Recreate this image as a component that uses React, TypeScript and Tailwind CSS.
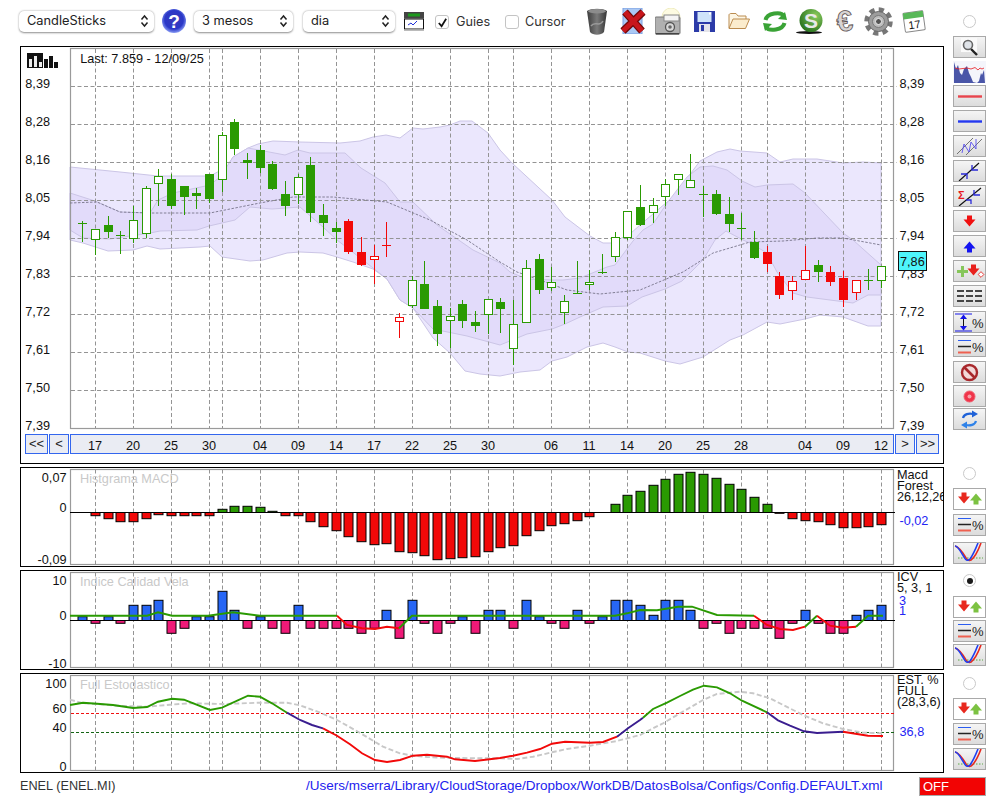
import type { ReactNode } from "react";

// candle x centres, read off the chart (spacing is not quite regular)
const X = [82,95,108,120,133,146,158,171,184,196,209,222,234,247,260,272,285,298,310,323,336,348,361,374,386,399,412,424,437,450,462,475,488,500,513,526,539,551,564,577,589,602,615,627,640,653,665,678,690,703,716,729,741,754,767,779,792,805,818,830,843,856,868,881];
const GRID_X = [95,133,171,209,222,260,298,336,374,412,450,488,513,551,589,627,665,703,741,767,805,843,881];
const DATES: [string, number][] = [["17",95],["20",133],["25",171],["30",209],["04",260],["09",298],["14",336],["17",374],["22",412],["25",450],["30",488],["06",551],["11",589],["14",627],["20",665],["25",703],["28",741],["04",805],["09",843],["12",881]];
const PRICES = ["8,39","8,28","8,16","8,05","7,94","7,83","7,72","7,61","7,50","7,39"];

// wick top, wick bottom, body top, body bottom, kind (G filled green, g hollow green, R filled red, r hollow red)
type Candle = [number, number, number, number, "G" | "g" | "R" | "r"];
const CANDLES: Candle[] = [
  [221,242,223,223,"G"],[229,255,229,239,"g"],[216,238,225,232,"G"],[231,254,235,235,"G"],
  [206,243,220,238,"g"],[186,238,188,233,"g"],[169,206,176,183,"g"],[174,209,179,206,"G"],
  [186,215,186,197,"G"],[188,209,193,196,"G"],[174,203,174,199,"G"],[132,192,135,179,"g"],
  [119,155,122,149,"G"],[153,179,160,163,"G"],[145,173,150,168,"G"],[161,190,164,189,"G"],
  [181,216,194,206,"G"],[174,204,177,194,"g"],[157,222,165,213,"G"],[204,236,215,223,"G"],
  [222,243,228,232,"G"],[219,254,221,252,"R"],[237,266,252,265,"R"],[245,284,256,259,"r"],
  [222,257,245,245,"R"],[313,338,317,321,"r"],[276,308,280,305,"g"],[261,309,284,309,"G"],
  [300,346,306,334,"G"],[308,348,316,320,"g"],[300,328,304,321,"G"],[311,332,322,326,"G"],
  [299,334,299,314,"g"],[298,333,302,309,"G"],[300,365,324,348,"g"],[260,323,268,322,"g"],
  [254,294,259,290,"G"],[267,291,282,287,"g"],[295,324,301,312,"g"],[261,293,293,293,"G"],
  [270,290,282,284,"g"],[254,274,272,272,"G"],[232,262,237,256,"g"],[211,240,211,237,"g"],
  [185,226,207,225,"G"],[198,223,205,212,"g"],[179,206,184,196,"g"],[174,195,174,179,"g"],
  [154,188,180,187,"g"],[186,217,194,194,"G"],[190,215,194,214,"G"],[197,232,214,224,"G"],
  [213,240,228,228,"G"],[231,259,242,258,"G"],[246,272,252,264,"R"],[272,299,276,295,"R"],
  [276,300,281,290,"r"],[246,279,270,279,"r"],[260,282,265,272,"G"],[266,286,272,282,"R"],
  [271,307,278,300,"R"],[280,300,280,292,"r"],[269,290,280,280,"G"],[266,288,266,280,"g"],
];

const MACD = [0,515.7,518.7,521.7,521.7,518.7,514.7,515.7,515.7,515.7,515.7,509.3,506.3,506.3,507.3,511.3,515.7,515.7,521.7,526.7,530.7,536.7,541.7,544.7,543.7,551.7,552.7,555.7,559.7,558.7,557.7,556.7,551.7,547.7,545.7,535.7,530.7,525.7,523.7,520.7,516.7,0,504.3,495.3,491.3,485.3,479.3,474.3,472.3,474.3,478.3,484.3,489.3,497.3,504.3,513.3,518.7,520.7,521.7,524.7,527.7,527.7,526.7,524.7];
const ICV = [616.7,623.3,616.7,623.3,605.3,605.3,600.3,633.3,628.3,616.7,616.7,591.3,610.3,628.3,616.7,628.3,633.3,605.3,628.3,628.3,628.3,628.3,633.3,628.3,610.3,638.3,600.3,623.3,633.3,623.3,616.7,633.3,610.3,610.3,628.3,600.3,616.7,623.3,628.3,610.3,623.3,616.7,600.3,600.3,605.3,615.3,600.3,600.3,610.3,628.3,623.3,633.3,628.3,628.3,628.3,638.3,623.3,610.3,623.3,633.3,633.3,615.3,610.3,605.3];

const UNION_TOP = "70,167 120,172 158,176 184,176 210,176 227,167 233,157 248,148 258,144 273,141 300,142 340,143 360,141 373,137 386,135 400,138 413,128 423,129 440,127 450,125 460,121 472,121 488,133 500,150 512,163 552,200 565,217 590,236 603,243 611,243 630,234 640,225 660,208 673,197 700,161 717,152 730,149 740,151 767,153 780,162 793,159 817,159 843,163 863,162 881,163";
const UNION_BOTTOM = "881,326 868,326 843,317 820,315 805,319 780,324 767,322 743,335 730,340 703,357 680,364 665,361 640,353 628,352 615,347 603,343 587,347 567,357 552,361 540,370 520,372 500,376 480,374 465,371 450,353 433,338 413,308 400,300 387,279 373,269 353,262 337,257 323,253 300,252 287,253 263,260 250,261 222,257 210,246 200,247 160,249 147,246 133,250 108,251 83,243 70,240";
const OVERLAP_TOP = "70,193 95,201 120,212 150,213 158,200 173,193 210,185 220,177 233,157 248,148 285,155 298,150 310,153 345,153 361,168 385,183 400,202 413,202 437,225 473,250 500,263 510,272 527,279 552,280 563,280 580,278 607,267 615,265 633,241 643,230 653,224 667,203 687,177 700,167 713,166 727,170 742,181 755,187 767,185 793,184 805,193 843,233 853,240 881,265";
const OVERLAP_BOTTOM = "881,295 868,295 853,303 807,297 793,293 777,272 767,253 750,243 743,240 726,231 715,240 703,260 682,281 665,289 642,297 627,306 603,307 580,317 565,324 552,329 527,334 500,345 467,336 433,329 413,308 400,300 387,279 373,268 350,250 337,240 323,227 300,207 272,209 250,207 235,220 209,226 197,230 160,231 150,233 110,239 83,238 70,230";
const SMA = "70,203 97,202 120,212 150,213 210,213 260,203 293,197 333,197 387,202 430,220 467,240 500,262 517,272 540,280 567,290 600,294 640,290 683,272 713,253 750,242 783,241 817,238 843,238 881,245";

const GREEN = "#2a9a02";
const RED = "#f20909";
const BLUE = "#2766f5";
const PINK = "#ef1a78";
const LINE_BLUE = "#3a1d8f";
const GRID = "#949494";

function Radio({ checked, className }: { checked?: boolean; className: string }) {
  return (
    <div className={`flex h-[13px] w-[13px] items-center justify-center self-center rounded-full border border-[#c9c9c9] bg-white ${className}`}>
      {checked && <div className="h-[6px] w-[6px] rounded-full bg-[#1a1a1a]" />}
    </div>
  );
}

function SideBtn({ children, className = "" }: { children: ReactNode; className?: string }) {
  return (
    <div className={`flex h-[22px] w-[33px] items-center justify-center border-[1.5px] border-[#a9a9a9] bg-gradient-to-b from-[#f5f5f5] to-[#dcdcdc] ${className}`}>
      {children}
    </div>
  );
}

function Icon({ children }: { children: ReactNode }) {
  return <svg viewBox="0 0 31 19" className="block h-[19px] w-[31px]">{children}</svg>;
}

function ArrowDown({ x, y, fill, s = 1 }: { x: number; y: number; fill: string; s?: number }) {
  return <polygon transform={`translate(${x} ${y}) scale(${s})`} points="-2.5,-6 2.5,-6 2.5,-2 6,-2 0,5 -6,-2 -2.5,-2" fill={fill} />;
}

function ArrowUp({ x, y, fill, s = 1 }: { x: number; y: number; fill: string; s?: number }) {
  return <polygon transform={`translate(${x} ${y}) scale(${s})`} points="-2.5,6 2.5,6 2.5,2 6,2 0,-5 -6,2 -2.5,2" fill={fill} />;
}

function Signals() {
  return (
    <Icon>
      <ArrowDown x={10} y={9.5} fill="#e8281e" />
      <ArrowUp x={22} y={9.5} fill="#7cc242" />
    </Icon>
  );
}

function LinesPct() {
  return (
    <Icon>
      <line x1="4" x2="17" y1="3.5" y2="3.5" stroke="#2a5cf0" strokeWidth="1" />
      <line x1="4" x2="17" y1="9.5" y2="9.5" stroke="#222" strokeWidth="1.5" />
      <line x1="4" x2="17" y1="15.5" y2="15.5" stroke="#ee6050" strokeWidth="2" />
      <text x="18" y="15" fontSize="13" fill="#222">%</text>
    </Icon>
  );
}

function Curves() {
  return (
    <Icon>
      <line x1="4" x2="29" y1="15" y2="15" stroke="#3a9a20" strokeWidth="0.8" strokeDasharray="1.5 1.5" />
      <path d="M1 3 C5 4 8 8 12 15 C13 17 15 18 17 17 C20 15 24 8 27 0" fill="none" stroke="#e8281e" strokeWidth="1.6" />
      <path d="M1 3 C4 3 7 9 10 14 C12 18 14 18 16 16 C19 12 22 5 24 0" fill="none" stroke="#1f3ff0" strokeWidth="1.6" />
    </Icon>
  );
}

function SideColumn() {
  return (
    <div className="ml-[9px] flex w-[33px] flex-col">
      <Radio className="mt-[15px]" />
      <SideBtn className="mt-[8px]">
        <Icon>
          <rect x="7" y="0" width="16" height="14" fill="#fafafa" />
          <line x1="17" y1="11" x2="23" y2="17" stroke="#222" strokeWidth="2.4" />
          <circle cx="14" cy="7" r="4.5" fill="#dfe3e8" stroke="#666" strokeWidth="1.6" />
        </Icon>
      </SideBtn>
      <div className="mt-[3px] h-[22px] w-[33px] bg-[#f4f5fb]">
        <svg viewBox="0 0 33 22" className="block h-full w-full">
          <path d="M1 22 L1 1 L3 8 L5 4 L7 12 L9 14 L11 8 L14 5 L16 12 L18 16 L20 21 L24 22 L26 20 L28 12 L29 14 L31 9 L32 22 Z" fill="#4a56a8" />
          <path d="M2 7 L6 8 L10 7.5 L14 7 L18 8 L22 6.5 L25 9 L27 7 L29 8 L31 7" fill="none" stroke="#e8181e" strokeWidth="0.8" />
        </svg>
      </div>
      <SideBtn className="mt-[2px]">
        <Icon><line x1="4" x2="28" y1="9.5" y2="9.5" stroke="#e8444c" strokeWidth="2.4" /></Icon>
      </SideBtn>
      <SideBtn className="mt-[3px]">
        <Icon><line x1="4" x2="28" y1="9.5" y2="9.5" stroke="#2438f0" strokeWidth="2.4" /></Icon>
      </SideBtn>
      <SideBtn className="mt-[3px]">
        <Icon>
          <line x1="3" y1="17" x2="19" y2="1" stroke="#555" strokeWidth="0.8" />
          <line x1="12" y1="18" x2="28" y2="2" stroke="#555" strokeWidth="0.8" />
          <path d="M8 16 L10 7 L15 15 L17 5 L22 12 L22 2" fill="none" stroke="#5a50f0" strokeWidth="0.9" />
        </Icon>
      </SideBtn>
      <SideBtn className="mt-[3px]">
        <Icon>
          <line x1="5" y1="19" x2="25" y2="1" stroke="#111" strokeWidth="1.2" />
          <path d="M7 12 L13 12 L13 17 M18 3 L18 8 L24 8" fill="none" stroke="#2a2ad8" strokeWidth="1.3" />
        </Icon>
      </SideBtn>
      <SideBtn className="mt-[3px]">
        <Icon>
          <line x1="5" y1="19" x2="27" y2="1" stroke="#111" strokeWidth="1.2" />
          <path d="M12 13 L17 13 L17 17 M20 3 L20 8 L26 8" fill="none" stroke="#2a2ad8" strokeWidth="1.3" />
          <text x="4" y="12" fontSize="11" fontWeight="bold" fill="#e8181e">Σ</text>
        </Icon>
      </SideBtn>
      <SideBtn className="mt-[3px]">
        <Icon><ArrowDown x={15.5} y={9.5} fill="#f01010" /></Icon>
      </SideBtn>
      <SideBtn className="mt-[3px]">
        <Icon><ArrowUp x={15.5} y={9.5} fill="#1414f0" /></Icon>
      </SideBtn>
      <SideBtn className="mt-[3px]">
        <Icon>
          <path d="M7 4 L10 4 L10 8 L14 8 L14 11 L10 11 L10 15 L7 15 L7 11 L3 11 L3 8 L7 8 Z" fill="#86c65a" />
          <ArrowDown x={19.5} y={8.5} fill="#e8201c" />
          <rect x="25" y="10.5" width="4" height="4" transform="rotate(45 27 12.5)" fill="#fff" stroke="#e8201c" strokeWidth="0.8" />
        </Icon>
      </SideBtn>
      <SideBtn className="mt-[3px]">
        <Icon>
          {[4, 9, 14].map((y) => (
            <line key={y} x1="3" x2="28" y1={y} y2={y} stroke="#444" strokeWidth="2" strokeDasharray="7 2" />
          ))}
        </Icon>
      </SideBtn>
      <SideBtn className="mt-[4px]">
        <Icon>
          <line x1="1" x2="18" y1="1" y2="1" stroke="#1414e8" strokeWidth="1" />
          <line x1="1" x2="18" y1="18" y2="18" stroke="#1414e8" strokeWidth="1" />
          <line x1="9.5" x2="9.5" y1="3" y2="16" stroke="#111" strokeWidth="1" />
          <polygon points="9.5,1.5 13,6 6,6" fill="#1414e8" />
          <polygon points="9.5,17.5 13,13 6,13" fill="#1414e8" />
          <text x="18" y="15" fontSize="13" fill="#222">%</text>
        </Icon>
      </SideBtn>
      <SideBtn className="mt-[2px]"><LinesPct /></SideBtn>
      <SideBtn className="mt-[4px]">
        <Icon>
          <circle cx="15.5" cy="9.5" r="7.5" fill="#f3d8d8" stroke="#a8282c" strokeWidth="2.4" />
          <line x1="10.5" y1="4.5" x2="20.5" y2="14.5" stroke="#a8282c" strokeWidth="2.6" />
        </Icon>
      </SideBtn>
      <SideBtn className="mt-[2px]">
        <Icon><circle cx="15.5" cy="9.5" r="5.5" fill="#f0344a" stroke="#f06070" strokeWidth="1" /><circle cx="15.5" cy="9.5" r="2" fill="#f8a0a8" /></Icon>
      </SideBtn>
      <SideBtn className="mt-[1px]">
        <Icon>
          <path d="M9 8 C10 4 15 3 19 4" fill="none" stroke="#1f62d8" strokeWidth="2.2" />
          <polygon points="18,0.5 24,4 18,7.5" fill="#1f62d8" />
          <path d="M22 11 C21 15 16 16 12 15" fill="none" stroke="#2f82e8" strokeWidth="2.2" />
          <polygon points="13,11.5 7,15 13,18.5" fill="#2f82e8" />
        </Icon>
      </SideBtn>

      <Radio className="mt-[36.5px]" />
      <SideBtn className="mt-[8px] bg-white bg-none"><Signals /></SideBtn>
      <SideBtn className="mt-[4px]"><LinesPct /></SideBtn>
      <SideBtn className="mt-[6px]"><Curves /></SideBtn>

      <Radio checked className="mt-[10.5px]" />
      <SideBtn className="mt-[8.5px] bg-white bg-none"><Signals /></SideBtn>
      <SideBtn className="mt-[2px]"><LinesPct /></SideBtn>
      <SideBtn className="mt-[2px]"><Curves /></SideBtn>

      <Radio className="mt-[11.5px]" />
      <SideBtn className="mt-[7.5px] bg-white bg-none"><Signals /></SideBtn>
      <SideBtn className="mt-[3px]"><LinesPct /></SideBtn>
      <SideBtn className="mt-[3px]"><Curves /></SideBtn>
    </div>
  );
}

function Select({ label, className }: { label: string; className: string }) {
  return (
    <div className={`flex h-[21px] items-center justify-between rounded-[5px] bg-white pl-[8px] pr-[5px] text-[12.8px] text-[#222] shadow-[0_0.5px_2px_rgba(0,0,0,0.45)] ${className}`}>
      <span className="font-['Inter',sans-serif]">{label}</span>
      <svg viewBox="0 0 9 14" className="h-[14px] w-[9px]">
        <path d="M1.5 5.5 L4.5 2 L7.5 5.5 M1.5 8.5 L4.5 12 L7.5 8.5" fill="none" stroke="#222" strokeWidth="1.5" />
      </svg>
    </div>
  );
}

function Check({ checked, label, boxClass, labelClass }: { checked?: boolean; label: string; boxClass: string; labelClass: string }) {
  return (
    <>
      <div className={`mt-[2px] flex h-[14px] w-[14px] items-center justify-center rounded-[3px] border border-[#c4c4c4] bg-white ${boxClass}`}>
        {checked && (
          <svg viewBox="0 0 12 12" className="h-[11px] w-[11px]">
            <path d="M2 6.5 L5 10 L10 2" fill="none" stroke="#111" strokeWidth="1.9" />
          </svg>
        )}
      </div>
      <span className={`mt-[2px] font-['Inter',sans-serif] text-[12.7px] text-[#333] ${labelClass}`}>{label}</span>
    </>
  );
}

function Toolbar() {
  return (
    <div className="mb-[4px] flex h-[42px] items-center pl-[19px]">
      <Select label="CandleSticks" className="w-[135px]" />
      <svg viewBox="0 0 24 24" className="ml-[8px] h-[24px] w-[24px]">
        <defs>
          <radialGradient id="helpBall" cx="50%" cy="45%" r="55%">
            <stop offset="0%" stopColor="#3a3ab8" />
            <stop offset="70%" stopColor="#2a38c8" />
            <stop offset="100%" stopColor="#8a9cf4" />
          </radialGradient>
        </defs>
        <circle cx="12" cy="12" r="12" fill="url(#helpBall)" />
        <text x="12" y="18.5" textAnchor="middle" fontSize="19" fontWeight="bold" fill="#fff">?</text>
      </svg>
      <Select label="3 mesos" className="ml-[8px] w-[99px]" />
      <Select label="dia" className="ml-[10px] w-[92px]" />
      <svg viewBox="0 0 20 19" className="ml-[9px] mt-[1px] h-[19px] w-[20px]">
        <rect x="0" y="0" width="20" height="6.5" fill="#444" />
        <rect x="4" y="1.5" width="12" height="3" fill="#1d9a1d" />
        <rect x="0.5" y="7" width="19" height="10" fill="#fff" stroke="#111" />
        <path d="M4 13 L7 11 L9 13 L13 9" fill="none" stroke="#2030d8" strokeWidth="1" />
        <rect x="0" y="17.5" width="20" height="1.5" fill="#bbb" />
      </svg>
      <Check checked label="Guies" boxClass="ml-[11px]" labelClass="ml-[7px] w-[49px]" />
      <Check label="Cursor" boxClass="ml-[0px]" labelClass="ml-[6px] w-[62px]" />

      <svg viewBox="0 0 20 27" className="h-[27px] w-[20px]">
        <defs>
          <linearGradient id="bin" x1="0" x2="1" y1="0" y2="0">
            <stop offset="0%" stopColor="#3c3c3c" />
            <stop offset="50%" stopColor="#7a7a7a" />
            <stop offset="100%" stopColor="#353535" />
          </linearGradient>
        </defs>
        <path d="M0 3 C4 0 16 0 20 3 L17 24 C14 27.5 6 27.5 3 24 Z" fill="url(#bin)" />
        <ellipse cx="10" cy="3.2" rx="9" ry="2.2" fill="#8c8c8c" />
        <path d="M4 18 C8 12 12 20 16 13" fill="none" stroke="#999" strokeWidth="1.5" />
      </svg>
      <svg viewBox="0 0 26 26" className="ml-[13px] h-[26px] w-[26px]">
        <rect x="3" y="0" width="19" height="26" fill="#aac8f4" stroke="#7a9fe0" />
        <path d="M3 23 L23 4 M5 4 L22 23" stroke="#720808" strokeWidth="7.5" />
        <path d="M3 23 L23 4 M5 4 L22 23" stroke="#c8161c" strokeWidth="5" />
      </svg>
      <svg viewBox="0 0 26 27" className="ml-[9px] h-[27px] w-[26px]">
        <circle cx="16" cy="9" r="9" fill="#fdfbe2" stroke="#efecc0" />
        <rect x="0" y="9" width="25" height="17" rx="1" fill="#b0b0b0" stroke="#777" />
        <rect x="9" y="7" width="15" height="6" fill="#f4f4f4" stroke="#888" />
        <circle cx="15" cy="19" r="4.5" fill="#d8d8d8" stroke="#555" strokeWidth="1.3" />
        <circle cx="15" cy="19" r="1.8" fill="#666" />
        <rect x="1" y="25" width="23" height="1.5" fill="#444" />
      </svg>
      <svg viewBox="0 0 21 21" className="ml-[13px] h-[21px] w-[21px]">
        <rect x="0" y="0" width="21" height="21" fill="#2c3ba8" />
        <rect x="3.5" y="1" width="14" height="10" fill="#cfe4fa" />
        <rect x="15" y="1.5" width="2" height="2" fill="#fff" />
        <rect x="5" y="13" width="11" height="8" fill="#e4e4ea" />
        <rect x="7" y="14" width="3" height="6" fill="#2c3ba8" />
      </svg>
      <svg viewBox="0 0 22 16" className="ml-[13px] h-[16px] w-[22px]">
        <path d="M1 15 L1 2 C1 1 2 0.5 3 0.5 L8 0.5 L10 3 L18 3 L18 6" fill="#fdf6e4" stroke="#bb8c50" />
        <path d="M1 15.5 L5 6 L21.5 6 L17.5 15.5 Z" fill="#fbeccd" stroke="#bb8c50" />
      </svg>
      <svg viewBox="0 0 24 23" className="ml-[13px] h-[23px] w-[24px]">
        <path d="M2.5 10 C4 3 18 1 21 6" fill="none" stroke="#3aa336" strokeWidth="4" />
        <polygon points="24,10 15,9 22,2" fill="#3aa336" />
        <path d="M21.5 13 C20 20 6 22 3 17" fill="none" stroke="#3aa336" strokeWidth="4" />
        <polygon points="0,13 9,14 2,21" fill="#3aa336" />
      </svg>
      <svg viewBox="0 0 27 25" className="ml-[9px] h-[25px] w-[27px]">
        <defs>
          <radialGradient id="coin" cx="70%" cy="30%" r="80%">
            <stop offset="0%" stopColor="#8acb5e" />
            <stop offset="100%" stopColor="#26701c" />
          </radialGradient>
        </defs>
        <ellipse cx="13" cy="23.5" rx="13" ry="1.5" fill="#111" />
        <circle cx="15" cy="11.5" r="11.5" fill="url(#coin)" />
        <text x="15" y="19" textAnchor="middle" fontSize="21" fontWeight="bold" fill="#e8e8e8">S</text>
      </svg>
      <svg viewBox="0 0 25 25" className="ml-[9px] h-[25px] w-[25px]">
        <text x="12.5" y="22" textAnchor="middle" fontSize="29" fontWeight="bold" fill="#d8d4d4" stroke="#5a5050" strokeWidth="0.8" transform="rotate(-8 12 12)">€</text>
      </svg>
      <svg viewBox="0 0 29 29" className="ml-[7px] h-[29px] w-[29px]">
        <circle cx="14.5" cy="14.5" r="12" fill="none" stroke="#777" strokeWidth="4.5" strokeDasharray="5.2 4.2" />
        <circle cx="14.5" cy="14.5" r="10" fill="#9c9c9c" stroke="#666" />
        <circle cx="14.5" cy="14.5" r="6" fill="#bdbdbd" stroke="#7a7a7a" />
        <circle cx="14.5" cy="14.5" r="3" fill="#555" stroke="#eee" />
      </svg>
      <svg viewBox="0 0 24 24" className="ml-[9px] h-[24px] w-[24px]">
        <g transform="rotate(-8 12 12)">
          <rect x="2" y="3" width="20" height="19" rx="1" fill="#fff" stroke="#888" />
          <rect x="2" y="3" width="20" height="6" fill="#58b858" />
          <text x="12" y="19.5" textAnchor="middle" fontSize="11" fill="#111">17</text>
        </g>
      </svg>
    </div>
  );
}

function Grid({ top, bottom }: { top: number; bottom: number }) {
  return (
    <>
      {GRID_X.map((x) => (
        <line key={x} x1={x + 0.5} x2={x + 0.5} y1={top} y2={bottom} stroke={GRID} strokeDasharray="4 2.5" />
      ))}
    </>
  );
}

function Frame({ top, bottom }: { top: number; bottom: number }) {
  return <rect x="70.5" y={top} width="823" height={bottom - top} fill="none" stroke="#9a9a9a" strokeWidth="1.2" />;
}

function Label({ x, y, anchor, fill = "#111", children }: { x: number; y: number; anchor?: "end"; fill?: string; children: ReactNode }) {
  return <text x={x} y={y} textAnchor={anchor} fill={fill} fontSize="12.7">{children}</text>;
}

function MainChart() {
  return (
    <svg viewBox="21 47 922 387" className="block h-[387px] w-[922px]">
      <polygon points={`${UNION_TOP} ${UNION_BOTTOM}`} fill="#ebe7fd" stroke="#cbc5e6" />
      <polygon points={`${OVERLAP_TOP} ${OVERLAP_BOTTOM}`} fill="#e2dbfa" stroke="#cbc5e6" />
      <Frame top={48.5} bottom={428.5} />
      {PRICES.slice(0, 9).map((_, i) => (
        <line key={i} x1="71" x2="897" y1={86.5 + i * 38} y2={86.5 + i * 38} stroke={GRID} strokeDasharray="4 2.5" />
      ))}
      <Grid top={49} bottom={428} />
      <polyline points={SMA} fill="none" stroke="#77748a" strokeWidth="0.9" strokeDasharray="2.5 1.5" />

      {CANDLES.map(([wt, wb, bt, bb, kind], i) => {
        const x = X[i] + 0.5;
        const color = kind === "G" || kind === "g" ? GREEN : RED;
        const hollow = kind === "g" || kind === "r";
        return (
          <g key={i}>
            <line x1={x} x2={x} y1={wt} y2={wb} stroke={color} />
            {bt === bb ? (
              <line x1={x - 4.5} x2={x + 4.5} y1={bt + 0.5} y2={bt + 0.5} stroke={color} />
            ) : hollow ? (
              <rect x={x - 4} y={bt + 0.5} width={8} height={bb - bt} fill="#fff" stroke={color} />
            ) : (
              <rect x={x - 4.5} y={bt} width={9} height={bb - bt} fill={color} />
            )}
          </g>
        );
      })}

      <rect x="27" y="53" width="16" height="15" fill="#111" />
      <rect x="29" y="59" width="3" height="8" fill="#eee" />
      <rect x="34" y="56" width="3" height="11" fill="#eee" />
      <rect x="39" y="62" width="3" height="5" fill="#eee" />
      <rect x="44" y="59" width="4" height="9" fill="#111" />
      <rect x="49" y="56" width="4" height="12" fill="#111" />
      <rect x="54" y="62" width="4" height="6" fill="#111" />

      <Label x={80.3} y={63}>Last: 7.859 - 12/09/25</Label>
      {PRICES.map((p, i) => (
        <g key={p}>
          <Label x={25.3} y={88 + i * 38}>{p}</Label>
          <Label x={899.5} y={88 + i * 38}>{p}</Label>
        </g>
      ))}
      <rect x="898.5" y="251.5" width="28" height="19" fill="#4ef5fb" stroke="#111" />
      <Label x={900} y={265.5}>7,86</Label>
    </svg>
  );
}

function NavBtn({ label, className }: { label: string; className: string }) {
  return (
    <div className={`flex h-[20px] items-center justify-center border border-[#3366ee] bg-[#eaecf3] text-[13px] text-[#222] ${className}`}>
      {label}
    </div>
  );
}

function DateNav() {
  return (
    <div className="flex gap-[1px] pl-[4px]">
      <NavBtn label="<<" className="w-[23px]" />
      <NavBtn label="<" className="w-[20px]" />
      <div className="h-[20px] w-[824px] border border-[#3366ee] bg-[#eaecf3]">
        <svg viewBox="71 435 822 18" className="block h-[18px] w-[822px]">
          {DATES.map(([d, x], i) => (
            <text key={i} x={x} y={449.5} textAnchor="middle" fill="#111" fontSize="12.7">{d}</text>
          ))}
        </svg>
      </div>
      <NavBtn label=">" className="w-[20px]" />
      <NavBtn label=">>" className="w-[23px]" />
    </div>
  );
}

function SubChart({ top, title, frameTop, frameBottom, children }: { top: number; title: string; frameTop: number; frameBottom: number; children: ReactNode }) {
  return (
    <div className="mt-[3px] h-[100px] w-[924px] border border-black bg-white">
      <svg viewBox={`21 ${top} 922 98`} className="block h-[98px] w-[922px]">
        <Frame top={frameTop} bottom={frameBottom} />
        <Grid top={frameTop} bottom={frameBottom} />
        <text x="80" y={frameTop + 13} fill="#c9c9c9" fontSize="12.7">{title}</text>
        {children}
      </svg>
    </div>
  );
}

function MacdChart() {
  return (
    <SubChart top={468} title="Histgrama MACD" frameTop={469.5} frameBottom={564.5}>
      {MACD.map((v, i) =>
        v === 0 ? null : (
          <rect key={i} x={X[i] - 4} y={Math.min(v, 512.5)} width="9" height={Math.abs(v - 512.5)} fill={v < 512 ? GREEN : RED} stroke="#000" />
        )
      )}
      <line x1="70" x2="895" y1="512.5" y2="512.5" stroke="#000" />
      <Label x={66.5} y={482} anchor="end">0,07</Label>
      <Label x={66.5} y={512} anchor="end">0</Label>
      <Label x={66.5} y={564} anchor="end">-0,09</Label>
      <Label x={897} y={478.5}>Macd</Label>
      <Label x={897} y={489.5}>Forest</Label>
      <Label x={897} y={500.5}>26,12,26</Label>
      <Label x={899.5} y={525} fill="#2424f4">-0,02</Label>
    </SubChart>
  );
}

const ICV_LINES: [string, string][] = [
  [GREEN, "70,615.7 147,615.7 158,612.3 172,615.7 208,615.7 233,612.3 260,615.7 337,615.7"],
  [RED, "337,615.7 347,625 362,628.3 375,629 387,626.7 399,628.3"],
  [GREEN, "399,628.3 412,615.7 615,615.7 627,613.3 640,610 657,610.3 678,606.7 692,606.7 717,615 754,615.7"],
  [RED, "754,615.7 767,625 780,629 793,630 805,626.7"],
  [GREEN, "805,626.7 817,615.7"],
  [RED, "817,615.7 830,625.7 843,627.7 856,626.7"],
  [GREEN, "856,626.7 868,615.7 883,615.7"],
];

function IcvChart() {
  return (
    <SubChart top={571} title="Indice Calidad Vela" frameTop={572.5} frameBottom={667.5}>
      {ICV.map((v, i) => (
        <rect key={i} x={X[i] - 4} y={Math.min(v, 620.5)} width="9" height={Math.abs(v - 620.5)} fill={v < 620 ? BLUE : PINK} stroke="#000" />
      ))}
      <line x1="70" x2="895" y1="620.5" y2="620.5" stroke="#000" />
      {ICV_LINES.map(([color, pts], i) => (
        <polyline key={i} points={pts} fill="none" stroke={color} strokeWidth="1.9" />
      ))}
      <Label x={66.5} y={585} anchor="end">10</Label>
      <Label x={66.5} y={620} anchor="end">0</Label>
      <Label x={66.5} y={667.5} anchor="end">-10</Label>
      <Label x={897} y={581}>ICV</Label>
      <Label x={897} y={592}>5, 3, 1</Label>
      <Label x={899} y={604.5} fill="#2424f4">3</Label>
      <Label x={899} y={615} fill="#2424f4">1</Label>
    </SubChart>
  );
}

const EST_SIGNAL = "70,699.7 83,703.3 97,704 117,705.7 147,706.7 170,704.7 190,703.3 223,704 260,702.7 287,702.7 300,705.3 322,713.3 337,720 358,731.7 383,746.7 400,753.3 413,755.7 427,757 450,758 500,758.3 517,759 533,756.7 552,752.3 567,749 590,745.7 617,741 640,735 663,723.3 680,713.3 703,700 717,694 740,691.7 753,693.3 770,698.3 803,715 823,723.3 843,729 863,732.7 882,733.3";
const EST_LINES: [string, string][] = [
  [GREEN, "70,705 83,702.7 97,703.7 113,705 133,708 147,707 158,701.7 172,698.7 184,699.7 210,710 222,707.7 248,695.7 260,696.7 272,703.3 287,712.7"],
  [LINE_BLUE, "287,712.7 300,720 312,725 323,728.3"],
  [RED, "323,728.3 337,735.7 350,744.3 362,753.3 375,760 387,762 400,760 413,755.7 427,754.7 447,756.7 455,759.3 475,761 500,758 513,755.7 527,752.7 540,749 552,743.7 565,741.7 590,742.7 603,742 617,736.7"],
  [LINE_BLUE, "617,736.7 628,728.3 640,720 643,717.7"],
  [GREEN, "643,717.7 653,709 667,702.7 680,696 693,689.7 704,685.7 717,687.3 730,693.3 742,700.7 767,712.3"],
  [LINE_BLUE, "767,712.3 778,720.3 790,725.7 804,731.3 817,733 843,731.7"],
  [RED, "843,731.7 857,734 868,735.7 883,736"],
];

function EstChart() {
  return (
    <SubChart top={674} title="Full Estodastico" frameTop={675.5} frameBottom={770.5}>
      <line x1="71" x2="895" y1="713.5" y2="713.5" stroke="#f01010" strokeDasharray="3 2" />
      <line x1="71" x2="895" y1="732.5" y2="732.5" stroke="#146414" strokeDasharray="3 2" />
      <polyline points={EST_SIGNAL} fill="none" stroke="#c8c8c8" strokeWidth="1.9" strokeDasharray="5 2.5" />
      {EST_LINES.map(([color, pts], i) => (
        <polyline key={i} points={pts} fill="none" stroke={color} strokeWidth="1.9" />
      ))}
      <Label x={66.5} y={688} anchor="end">100</Label>
      <Label x={66.5} y={713} anchor="end">60</Label>
      <Label x={66.5} y={732} anchor="end">40</Label>
      <Label x={66.5} y={770.5} anchor="end">0</Label>
      <Label x={897} y={684}>EST. %</Label>
      <Label x={897} y={695}>FULL</Label>
      <Label x={897} y={706}>(28,3,6)</Label>
      <Label x={899.5} y={735.5} fill="#2424f4">36,8</Label>
    </SubChart>
  );
}

function StatusBar() {
  return (
    <div className="flex h-[27px] items-center pl-[20px] pr-[14px] text-[12.7px]">
      <span className="w-[286px] text-[#333]">ENEL (ENEL.MI)</span>
      <span className="text-[13.5px] text-[#2222ee]">/Users/mserra/Library/CloudStorage/Dropbox/WorkDB/DatosBolsa/Configs/Config.DEFAULT.xml</span>
      <div className="ml-auto flex h-[19px] w-[67px] items-center border-[1.5px] border-[#a9a9a9] bg-[#f20404] pl-[3px] text-[13px] text-white">
        OFF
      </div>
    </div>
  );
}

export default function App() {
  return (
    <div className="h-[800px] w-[1000px] overflow-hidden bg-white font-['Liberation_Sans',sans-serif]">
      <div className="flex h-[773px]">
        <div className="w-[944px]">
          <Toolbar />
          <div className="ml-[20px] h-[418px] w-[924px] border border-black bg-white">
            <MainChart />
            <DateNav />
          </div>
          <div className="ml-[20px]">
            <MacdChart />
            <IcvChart />
            <EstChart />
          </div>
        </div>
        <SideColumn />
      </div>
      <StatusBar />
    </div>
  );
}
